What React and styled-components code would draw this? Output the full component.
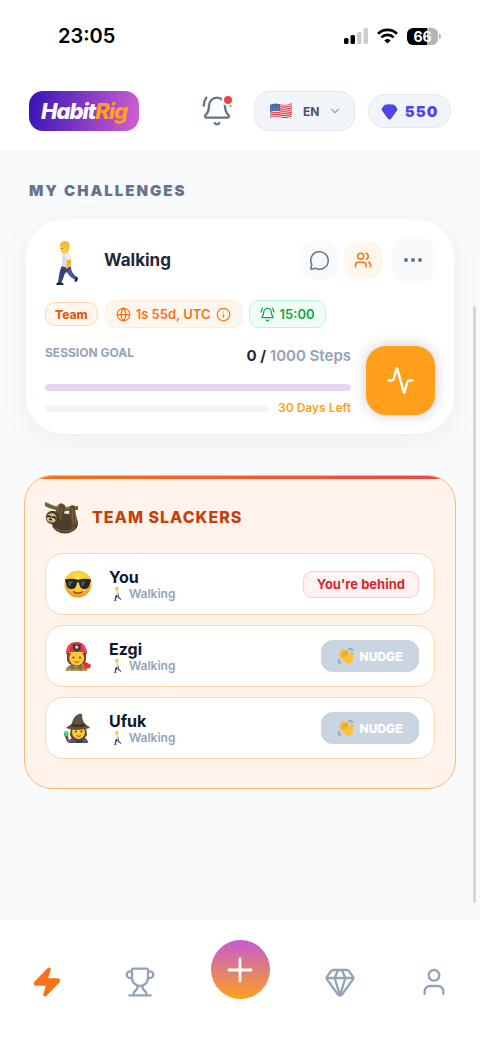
import React from "react"
import styled, { createGlobalStyle } from "styled-components"
import {
  Activity,
  BellRing,
  ChevronDown,
  Ellipsis,
  Gem,
  Globe,
  Info,
  MessageCircle,
  Plus,
  Trophy,
  User,
  Users,
  Zap,
} from "lucide-react"

const GlobalStyle = createGlobalStyle`
  * {
    box-sizing: border-box;
  }

  body {
    margin: 0;
    background: #f8fafc;
    color: #0f172a;
    font-family: Inter, "Liberation Sans", sans-serif;
  }

  button, select {
    font-family: inherit;
    border: 0;
    padding: 0;
    margin: 0;
    cursor: pointer;
  }

  h1, h2, h3, p, ul {
    margin: 0;
    padding: 0;
  }

  svg {
    display: block;
    flex: none;
  }
`

const Page = styled.div`
  display: flex;
  flex-direction: column;
  width: 100%;
  min-height: 100vh;
`

/* status bar */

const StatusBar = styled.div`
  display: flex;
  align-items: center;
  justify-content: space-between;
  height: 72px;
  padding: 0 39px 0 58px;
  background: #fff;
`

const Clock = styled.time`
  font-size: 20px;
  font-weight: 600;
  color: #000;
`

const StatusIcons = styled.div`
  display: flex;
  align-items: center;
  gap: 9px;
`

const Battery = styled.div`
  display: flex;
  align-items: center;
  gap: 1px;

  span {
    width: 31px;
    height: 17px;
    border-radius: 6px;
    background: linear-gradient(90deg, #000 66%, #b5b5b5 66%);
    color: #fff;
    font-size: 14px;
    font-weight: 700;
    line-height: 17px;
    text-align: center;
  }

  i {
    width: 2px;
    height: 5px;
    border-radius: 0 2px 2px 0;
    background: #b5b5b5;
  }
`

/* header */

const TopBar = styled.header`
  display: flex;
  align-items: center;
  height: 79px;
  padding: 0 29px;
  background: #fff;
  border-bottom: 1px solid #f1f5f9;
`

const Logo = styled.a`
  display: flex;
  align-items: center;
  height: 40px;
  padding: 0 12px;
  margin-right: auto;
  border-radius: 14px;
  background: linear-gradient(100deg, #3d17b8 5%, #cb5bd0 95%);
  color: #fff;
  font-size: 22px;
  font-weight: 800;
  font-style: italic;
  letter-spacing: -1px;
  text-decoration: none;

  span {
    color: #ff9f1c;
  }
`

const BellButton = styled.button`
  position: relative;
  width: 32px;
  height: 32px;
  margin-right: 21px;
  background: none;
  color: #64748b;
`

const Dot = styled.span`
  position: absolute;
  top: -1px;
  right: -1px;
  width: 12px;
  height: 12px;
  border: 2px solid #fff;
  border-radius: 50%;
  background: #ef4444;
`

const Language = styled.label`
  display: flex;
  align-items: center;
  height: 40px;
  padding: 0 12px 0 14px;
  border: 1px solid #e2e8f0;
  border-radius: 15px;
  background: #f1f5f9;
  color: #94a3b8;
`

const LanguageSelect = styled.select`
  appearance: none;
  width: 18px;
  margin: 0 7px 0 10px;
  background: none;
  color: #475569;
  font-size: 12px;
  font-weight: 700;
`

const Points = styled.button`
  display: flex;
  align-items: center;
  justify-content: center;
  gap: 7px;
  width: 83px;
  height: 34px;
  margin-left: 13px;
  border: 1px solid #e2e8f0;
  border-radius: 17px;
  background: #f1f5f9;
  color: #4f46e5;
  font-size: 15px;
  font-weight: 900;
  letter-spacing: 1px;
`

/* content */

const Main = styled.main`
  flex: 1;
  padding: 28px 24px;
`

const SectionTitle = styled.h1`
  padding-left: 5px;
  color: #64748b;
  font-size: 15px;
  font-weight: 900;
  line-height: 24px;
  letter-spacing: 2px;
`

const ChallengeCard = styled.section`
  display: flex;
  flex-direction: column;
  gap: 18px;
  margin: 16px 2px 41px;
  padding: 19px;
  border-radius: 38px;
  background: #fff;
  box-shadow: 0 6px 32px rgba(15, 23, 42, 0.05);
`

const CardHead = styled.div`
  display: flex;
  align-items: center;
  height: 44px;
`

const CardIcon = styled.span`
  display: flex;
  justify-content: center;
  width: 44px;
  padding-top: 5px;
`

const CardName = styled.h2`
  flex: 1;
  padding-left: 15px;
  color: #1e293b;
  font-size: 17px;
  font-weight: 700;
`

const RoundButton = styled.button`
  display: flex;
  align-items: center;
  justify-content: center;
  width: ${props => props.$size}px;
  height: ${props => props.$size}px;
  margin-left: ${props => props.$gap}px;
  border-radius: 14px;
  background: ${props => (props.$active ? "#fff7ed" : "#f8fafc")};
  color: ${props => (props.$active ? "#f97316" : "#64748b")};
`

const Chips = styled.div`
  display: flex;
  align-items: center;
  gap: 7px;
`

const Chip = styled.span`
  display: flex;
  align-items: center;
  gap: 5px;
  height: 28px;
  padding: 0 10px;
  border: 1px solid #ffedd5;
  border-radius: 10px;
  background: #fff7ed;
  color: #f97316;
  font-size: 13px;
  font-weight: 600;
`

const TeamChip = styled(Chip)`
  height: 24px;
  padding: 0 9px;
  border-color: #fed7aa;
  color: #ea580c;
  font-size: 12px;
  font-weight: 800;
`

const TimeChip = styled(Chip)`
  border-color: #bbf7d0;
  background: #f0fdf4;
  color: #16a34a;
`

const GoalRow = styled.div`
  display: flex;
  gap: 15px;
`

const Goal = styled.div`
  flex: 1;
`

const GoalHead = styled.div`
  display: flex;
  justify-content: space-between;
  margin-bottom: 18px;
`

const GoalLabel = styled.h3`
  color: #94a3b8;
  font-size: 12px;
  font-weight: 700;
  line-height: 14px;
`

const GoalValue = styled.p`
  color: #94a3b8;
  font-size: 15px;
  font-weight: 600;
  line-height: 20px;

  b {
    color: #1e293b;
    font-weight: 700;
  }
`

const Track = styled.div`
  flex: 1;
  height: 7px;
  border-radius: 4px;
  background: ${props => props.$color};
`

const DaysRow = styled.div`
  display: flex;
  align-items: center;
  gap: 9px;
  margin-top: 10px;
  color: #ff9f1c;
  font-size: 12px;
  font-weight: 600;
  line-height: 14px;
`

const StartButton = styled.button`
  display: flex;
  align-items: center;
  justify-content: center;
  width: 69px;
  height: 69px;
  border-radius: 20px;
  background: #ff9f1c;
  color: #fff;
  box-shadow: 0 0 14px rgba(15, 23, 42, 0.22);
`

const Slackers = styled.section`
  position: relative;
  overflow: hidden;
  padding: 24px 20px 29px;
  border: 1px solid #fdba74;
  border-radius: 28px;
  background: #fff3ec;

  &::before {
    content: "";
    position: absolute;
    top: 0;
    left: 0;
    right: 0;
    height: 3px;
    background: linear-gradient(90deg, #f97316, #ef4444);
  }
`

const SlackersTitle = styled.h2`
  display: flex;
  align-items: center;
  gap: 13px;
  height: 34px;
  margin-bottom: 19px;
  color: #c2410c;
  font-size: 16px;
  font-weight: 800;
  letter-spacing: 1px;
`

const MemberList = styled.ul`
  display: flex;
  flex-direction: column;
  gap: 10px;
  list-style: none;
`

const Member = styled.li`
  display: flex;
  align-items: center;
  height: 62px;
  padding: 0 15px 0 17px;
  border: 1px solid #fed7aa;
  border-radius: 18px;
  background: #fff;
`

const MemberText = styled.div`
  flex: 1;
  padding: 2px 0 0 16px;

  h3 {
    font-size: 16px;
    font-weight: 700;
    line-height: 18px;
  }

  p {
    display: flex;
    align-items: center;
    gap: 4px;
    color: #94a3b8;
    font-size: 12px;
    font-weight: 600;
    line-height: 16px;
  }
`

const SmallIcon = styled.span`
  display: flex;
  justify-content: center;
  width: 16px;
`

const Behind = styled.span`
  padding: 0 13px;
  border: 1px solid #fecaca;
  border-radius: 9px;
  background: #fef2f2;
  color: #dc2626;
  font-size: 13px;
  font-weight: 700;
  line-height: 25px;
`

const Nudge = styled.button`
  display: flex;
  align-items: center;
  justify-content: center;
  gap: 5px;
  width: 98px;
  height: 32px;
  border-radius: 12px;
  background: #cbd5e1;
  color: #fff;
  font-size: 12px;
  font-weight: 800;
`

const ScrollThumb = styled.div`
  position: fixed;
  top: 306px;
  right: 4px;
  bottom: 137px;
  width: 3px;
  border-radius: 2px;
  background: #d4d6d9;
`

/* bottom navigation */

const TabBar = styled.nav`
  display: flex;
  justify-content: space-between;
  height: 121px;
  padding: 20px 24px 0;
  border-top: 1px solid #f1f5f9;
  background: #fff;
`

const Tab = styled.a`
  display: flex;
  align-items: center;
  justify-content: center;
  width: 45px;
  height: 84px;
  color: ${props => (props.$active ? "#f97316" : "#94a3b8")};
`

const AddButton = styled.button`
  display: flex;
  align-items: center;
  justify-content: center;
  width: 59px;
  height: 59px;
  border-radius: 50%;
  background: linear-gradient(180deg, #c45cd3, #ff9f1c);
  color: #fff;
`

const Signal = () => (
  <svg width="24" height="16" viewBox="0 0 24 16">
    <rect x="0" y="10" width="4.5" height="6" rx="1.5" />
    <rect x="6.5" y="7" width="4.5" height="9" rx="1.5" />
    <rect x="13" y="4" width="4.5" height="12" rx="1.5" fill="#ccc" />
    <rect x="19.5" y="0" width="4.5" height="16" rx="1.5" fill="#ccc" />
  </svg>
)

const Wifi = () => (
  <svg width="21" height="16" viewBox="0 0 21 16" fill="none" stroke="#000" strokeWidth="2.7">
    <path d="M1 5.8a13.6 13.6 0 0 1 19 0" />
    <path d="M4.4 9.4a8.7 8.7 0 0 1 12.2 0" />
    <path d="M7.4 12.4a4.6 4.6 0 0 1 6.2 0L10.5 15.4z" fill="#000" stroke="none" />
  </svg>
)

const Flag = () => (
  <svg width="24" height="18" viewBox="0 0 24 18">
    <clipPath id="flag">
      <path d="M1 3.2C5 1 8 1.6 12 2.4S19 3 23 1v13.4c-4 2-7 1.8-11 1s-7-1.4-11 .8z" />
    </clipPath>
    <g clipPath="url(#flag)">
      <rect width="24" height="18" fill="#f3e7e8" />
      {[0, 1, 2, 3, 4, 5, 6].map(i => (
        <path
          key={i}
          d={`M0 ${3.4 + i * 2.1}C5 ${1 + i * 2.1} 8 ${1.6 + i * 2.1} 12 ${2.6 + i * 2.1}S19 ${3.2 + i * 2.1} 24 ${1 + i * 2.1}`}
          fill="none"
          stroke="#dc3b4b"
          strokeWidth="1.1"
        />
      ))}
      <path d="M0 0h11v9.2C7 8.4 4 8.6 0 10.5z" fill="#3f6fa8" />
      <path d="M2 4.5h8M2 6.5h8M2 8.3h8" stroke="#8fb0d6" strokeWidth=".6" strokeDasharray=".7 1" />
    </g>
  </svg>
)

const WalkingMan = ({ size }) => (
  <svg width={size / 2} height={size} viewBox="0 0 22 44">
    <path d="M12 25h3c0 5 1.500 7.500 6 11l-1.800 2.800C14 36 11 33 10.500 29z" fill="#4d589c" />
    <path d="M6 24.500l8.500 1c-1 4-3 5-6 7.500-1 4-2 6-3.500 9.500l-3-.5c1-6 1-11 4-17.500z" fill="#36407c" />
    <path d="M2 41.500h3.500l2 1V44H.5c-.5-1.500.2-2.200 1.500-2.500zM20.800 35.500L18.500 39l.5 2c1.500-.2 3-1.500 3-3.800z" fill="#20232e" />
    <path d="M7 12c3-1.500 6-.5 7.500 3l.8 10.500c-3 1-6.500.8-9.500-.3C6.500 20 5.500 16 7 12z" fill="#d9dde3" />
    <path d="M10.500 16l4.500 1c.5 4 .5 6-1.500 8.500L11 28l-1.500-1c2-3 1-7 1-11z" fill="#f3b726" />
    <path d="M9 12.500c3-.8 5 .5 5.800 3l.5 3-5 .5c-.7-2-1.800-4-1.300-6.500z" fill="#e9ecf0" />
    <path d="M4.500 4.500h8c1 4 .5 7-3 8-3 .5-4.500-.5-4.500-3L4 8z" fill="#ffcc3f" />
    <path d="M3.500 5C3.500 1.500 6.500 0 9.500 0c3.700.2 4.800 3 3.800 7.500l-2 2-1.600-3C8 5.800 5.500 6.300 3.500 5z" fill="#f2bc36" />
    <circle cx="6.2" cy="7.5" r=".6" fill="#5b3b12" />
  </svg>
)

const Sloth = () => (
  <svg width="34" height="34" viewBox="0 0 34 34">
    <path d="M0 2c6 3 11 5 17 5s10-1 16-1v4c-6 0-11 2-17 1S6 9 0 6z" fill="#5d6b2c" />
    <path d="M2 3c8 4 14 6 29 4" fill="none" stroke="#86934a" strokeWidth="1" />
    <ellipse cx="20" cy="23.5" rx="13" ry="10" fill="#4b3c2c" />
    <path d="M13 5c3-3 6-2 5 2l-5 14-5-3z" fill="#6d5a40" />
    <path d="M15 5c4-2 6 0 5 3l-2 14-5-2z" fill="#56452f" />
    <path d="M25 6c4-2 6 0 5 4l3 14-6 4-3-15z" fill="#5d4a33" />
    <path d="M27 8l1 15M17 8l-2 11M30 12l1 12" stroke="#8a7453" strokeWidth=".7" />
    <path d="M10 28c5 4 15 5 20-1" stroke="#6d5a40" strokeWidth="1.5" fill="none" />
    <circle cx="7.5" cy="17.5" r="6.8" fill="#4b3b29" />
    <ellipse cx="6.5" cy="18" rx="5" ry="4.8" fill="#d7bf92" />
    <path d="M2 17c2-1.500 3-1 4 .5M7 17.500c2-1.500 3-.5 4 2" stroke="#3b2b1b" strokeWidth="1.8" fill="none" />
    <ellipse cx="5.5" cy="19.5" rx="1.5" ry="1.1" fill="#2b1f16" />
    <path d="M3.500 21.500c2 1 4 .8 5-.5" stroke="#6b4b2b" strokeWidth=".6" fill="none" />
  </svg>
)

const CoolFace = () => (
  <svg width="30" height="30" viewBox="0 0 30 30">
    <defs>
      <radialGradient id="face" cx=".5" cy=".35" r=".65">
        <stop offset="0" stopColor="#ffe94f" />
        <stop offset=".65" stopColor="#fdc52f" />
        <stop offset="1" stopColor="#ee8f1b" />
      </radialGradient>
    </defs>
    <circle cx="15" cy="15" r="13.5" fill="url(#face)" />
    <path d="M2 10.500c4-1.300 9-1 13 .3 4-1.300 9-1.600 13-.3v2l-.9.8c-.6 5.500-2.600 6.700-6 6.700-3.300 0-4.600-2.500-5.100-6.500h-2c-.5 4-1.800 6.500-5.100 6.500-3.400 0-5.400-1.200-6-6.700l-.9-.8z" fill="#23262b" />
    <path d="M5 12.500l5 0-3.500 5c-1-1-1.400-3-1.500-5zM18 12.500h5l-3.500 5c-1-1-1.400-3-1.500-5z" fill="#50545c" />
    <path d="M10.500 22.800c3 1.900 6 1.900 9 0" fill="none" stroke="#7a3d0a" strokeWidth="1.2" strokeLinecap="round" />
  </svg>
)

const Firefighter = () => (
  <svg width="30" height="30" viewBox="0 0 30 30">
    <path d="M3 30c0-5 4-7 11-7s10 2 10 7z" fill="#9a8560" />
    <path d="M8 24l5 4 5-4 2 6H7z" fill="#7d6a49" />
    <path d="M5 29h17" stroke="#d9c94e" strokeWidth="1.2" />
    <path d="M4 12h19v6c0 4-4 7-9.500 7S4 22 4 18z" fill="#8b3a30" />
    <ellipse cx="13.7" cy="17" rx="7.5" ry="7.5" fill="#ffc83a" />
    <circle cx="10.5" cy="16.5" r="1" fill="#5a3418" />
    <circle cx="17" cy="16.5" r="1" fill="#5a3418" />
    <path d="M11.500 20.500c1.500 1 3 1 4.500 0" stroke="#a1471f" strokeWidth="1" fill="none" />
    <path d="M3 13C3 5 7 1 13.500 1S24 5 24 13c-5-3-16-3-21 0z" fill="#dc3636" />
    <path d="M8 4c-2 2-3 4-3 6M19 4c2 2 3 4 3 6" stroke="#ff7b78" strokeWidth="1" fill="none" />
    <path d="M10 3.500h7.500V8l-3.700 3L10 8z" fill="#353a3d" />
    <circle cx="13.7" cy="6.2" r="1.6" fill="#d4d8d8" />
    <path d="M17 30l7-6" stroke="#b77a38" strokeWidth="1.6" />
    <path d="M19 22l4-1 5 3-1 3-4 1z" fill="#e2332f" />
  </svg>
)

const Witch = () => (
  <svg width="30" height="30" viewBox="0 0 30 30">
    <path d="M5 30c1-5 5-6 11-6s9 2 9 6z" fill="#59517d" />
    <path d="M12 25l4 3 4-3-1 5h-6z" fill="#36433a" />
    <path d="M8 15h15l1 7-3 4H9l-2-4z" fill="#594331" />
    <ellipse cx="15.5" cy="19" rx="6.5" ry="7" fill="#ffc83a" />
    <circle cx="13" cy="18.5" r=".9" fill="#4a2b12" />
    <circle cx="18.5" cy="18.5" r=".9" fill="#4a2b12" />
    <path d="M13.500 22.500c1.500 1 3 1 4.500 0" stroke="#a1471f" strokeWidth="1" fill="none" />
    <path d="M3 15c3-3 5-3 6-5 1-4 3-8 8-9.500 2 .5 3 1.500 2 3.500 1 4 2 6 4 8 2 1 3 1 4 3-7 2-17 3-24 0z" fill="#5f5442" />
    <path d="M9 10.500c4 1.500 9 1.500 13 0l1 2c-4 2-11 2-15 .3z" fill="#3b3328" />
    <rect x="1" y="18" width="4.5" height="6" rx="2" fill="#37c978" />
    <path d="M2 23l3 0 1 5-2 1z" fill="#6e4b34" />
    <circle cx="3" cy="19.5" r=".8" fill="#a8f5c9" />
  </svg>
)

const Wave = () => (
  <svg width="17" height="17" viewBox="0 0 17 17">
    <g stroke="#f2b42b" strokeWidth="2.4" strokeLinecap="round">
      <path d="M9 12L2.300 7.500M9.500 11L3 4.500M11 10L5 2.500M12 9.500L8 2.500M13.500 11l.5-5" />
    </g>
    <path d="M6 8l6-3 2.500 2c1 3 1 6-1 8-2.500 1.500-5 1-8-2L3 10.500z" fill="#fcc43a" />
    <path d="M4 7l3.500 3.200M5.500 4.800l3.200 4M7.500 3.500l2.700 4.500" stroke="#cf8f19" strokeWidth=".5" fill="none" />
    <path d="M10 1c2 .2 3 1 3.600 2.500M11 0c2.500 0 3.800 1 4.700 3M.5 11c.3 2 1.200 3 3 3.500M0 13c.6 1.800 1.400 2.800 3 3.300" stroke="#7c8794" strokeWidth=".9" fill="none" />
  </svg>
)

const members = [
  { name: "You", Avatar: CoolFace, behind: true },
  { name: "Ezgi", Avatar: Firefighter },
  { name: "Ufuk", Avatar: Witch },
]

const Header = () => (
  <TopBar>
    <Logo href="#home">
      Habit<span>Rig</span>
    </Logo>
    <BellButton aria-label="Notifications">
      <BellRing size={32} strokeWidth={1.75} />
      <Dot />
    </BellButton>
    <Language>
      <Flag />
      <LanguageSelect aria-label="Language" defaultValue="EN">
        <option>EN</option>
        <option>TR</option>
      </LanguageSelect>
      <ChevronDown size={14} strokeWidth={2} />
    </Language>
    <Points>
      <Gem size={17} fill="currentColor" />
      550
    </Points>
  </TopBar>
)

const Challenge = () => (
  <ChallengeCard>
    <CardHead>
      <CardIcon>
        <WalkingMan size={44} />
      </CardIcon>
      <CardName>Walking</CardName>
      <RoundButton $size={39} $gap={0} aria-label="Chat">
        <MessageCircle size={21} strokeWidth={1.75} />
      </RoundButton>
      <RoundButton $size={38} $gap={5} $active aria-label="Team">
        <Users size={18} />
      </RoundButton>
      <RoundButton $size={44} $gap={9} aria-label="More">
        <Ellipsis size={24} />
      </RoundButton>
    </CardHead>
    <Chips>
      <TeamChip>Team</TeamChip>
      <Chip>
        <Globe size={15} />
        1s 55d, UTC
        <Info size={15} />
      </Chip>
      <TimeChip>
        <BellRing size={15} />
        15:00
      </TimeChip>
    </Chips>
    <GoalRow>
      <Goal>
        <GoalHead>
          <GoalLabel>SESSION GOAL</GoalLabel>
          <GoalValue>
            <b>0 /</b> 1000 Steps
          </GoalValue>
        </GoalHead>
        <Track $color="#e5d6f3" />
        <DaysRow>
          <Track $color="#f1f5f9" />
          30 Days Left
        </DaysRow>
      </Goal>
      <StartButton aria-label="Start session">
        <Activity size={29} />
      </StartButton>
    </GoalRow>
  </ChallengeCard>
)

const TeamSlackers = () => (
  <Slackers>
    <SlackersTitle>
      <Sloth />
      TEAM SLACKERS
    </SlackersTitle>
    <MemberList>
      {members.map(({ name, Avatar, behind }) => (
        <Member key={name}>
          <Avatar />
          <MemberText>
            <h3>{name}</h3>
            <p>
              <SmallIcon>
                <WalkingMan size={14} />
              </SmallIcon>
              Walking
            </p>
          </MemberText>
          {behind ? (
            <Behind>You're behind</Behind>
          ) : (
            <Nudge>
              <Wave />
              NUDGE
            </Nudge>
          )}
        </Member>
      ))}
    </MemberList>
  </Slackers>
)

const App = () => (
  <Page>
    <GlobalStyle />
    <StatusBar>
      <Clock>23:05</Clock>
      <StatusIcons>
        <Signal />
        <Wifi />
        <Battery>
          <span>66</span>
          <i />
        </Battery>
      </StatusIcons>
    </StatusBar>
    <Header />
    <Main>
      <SectionTitle>MY CHALLENGES</SectionTitle>
      <Challenge />
      <TeamSlackers />
    </Main>
    <ScrollThumb />
    <TabBar>
      <Tab href="#challenges" $active aria-label="Challenges">
        <Zap size={32} strokeWidth={1.75} fill="currentColor" />
      </Tab>
      <Tab href="#trophies" aria-label="Trophies">
        <Trophy size={32} strokeWidth={1.75} />
      </Tab>
      <AddButton aria-label="Add challenge">
        <Plus size={38} strokeWidth={1.75} />
      </AddButton>
      <Tab href="#rewards" aria-label="Rewards">
        <Gem size={32} strokeWidth={1.75} />
      </Tab>
      <Tab href="#profile" aria-label="Profile">
        <User size={32} strokeWidth={1.75} />
      </Tab>
    </TabBar>
  </Page>
)

export default App
